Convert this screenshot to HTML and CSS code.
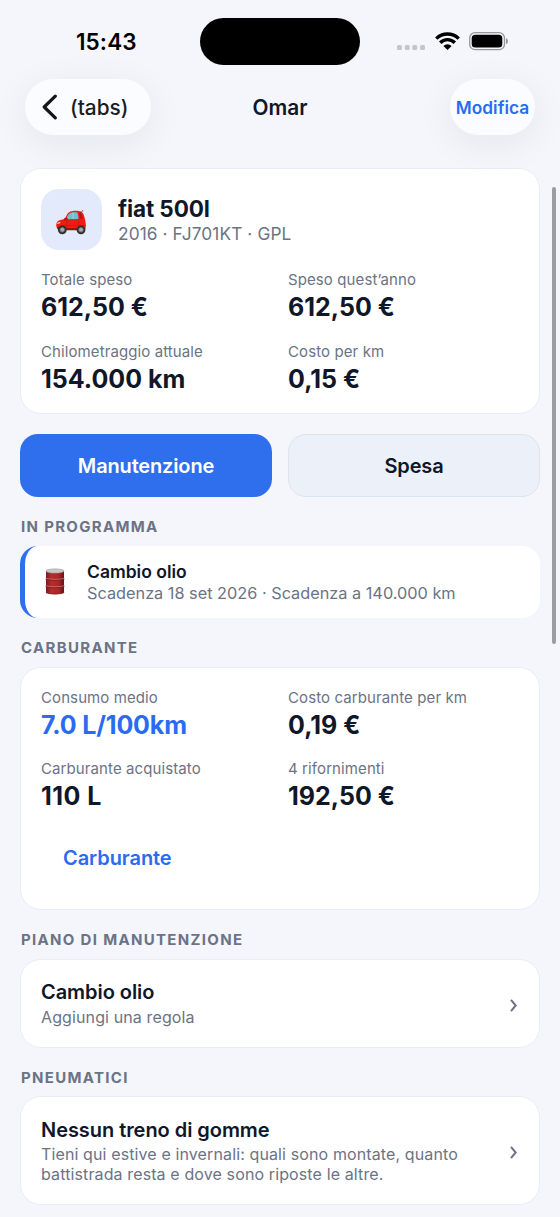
FILE: index.html
```html
<!DOCTYPE html>
<html lang="it">
<head>
<meta charset="utf-8">
<meta name="viewport" content="width=device-width, initial-scale=1">
<title>Omar</title>
<link rel="stylesheet" href="styles.css">
</head>
<body>
<div class="screen">
  <header class="top">
    <div class="status">
      <span class="time">15:43</span>
      <span class="island"></span>
      <span class="indicators">
        <svg class="dots" width="28" height="5" viewBox="0 0 28 5"><g fill="#c4c5ca"><rect width="5" height="5" rx="1.6"/><rect x="7.7" width="5" height="5" rx="1.6"/><rect x="15.3" width="5" height="5" rx="1.6"/><rect x="23" width="5" height="5" rx="1.6"/></g></svg>
        <svg class="wifi" width="25" height="18" viewBox="0 0 25 18"><g fill="none" stroke="#000" stroke-width="3.4"><path d="M1.3 6.6a16 16 0 0 1 22.4 0"/><path d="M5.2 10.7a10.3 10.3 0 0 1 14.6 0"/></g><path d="M8.4 14a5.8 5.8 0 0 1 8.2 0l-4.1 3.9z"/></svg>
        <svg class="battery" width="40" height="19" viewBox="0 0 40 19"><rect x=".7" y=".7" width="34.8" height="17" rx="5.4" fill="none" stroke="#96979b" stroke-width="1.3"/><rect x="2.7" y="2.8" width="30.6" height="12.8" rx="3.6"/><path d="M37 6.3c2.6.7 2.6 5.1 0 5.8z" fill="#96979b"/></svg>
      </span>
    </div>
    <nav class="nav">
      <button class="pill back"><svg width="16" height="26" viewBox="0 0 16 26"><path d="M13.3 2.2 2.2 13l11.1 10.8" fill="none" stroke="#151516" stroke-width="3.2" stroke-linecap="round" stroke-linejoin="round"/></svg><span>(tabs)</span></button>
      <h1 class="page-title">Omar</h1>
      <button class="pill edit"><span>Modifica</span></button>
    </nav>
  </header>

  <main class="content">
    <section class="card vehicle">
      <div class="vehicle-head">
        <div class="avatar">
          <svg width="33" height="26" viewBox="0 0 33 26">
            <path d="m26.2 4 1.8-3" stroke="#555" stroke-width=".8"/>
            <path d="M2.5 19.8C.6 17.6.8 13 3.8 11.5L10 9.8C11.5 5.8 13 3.2 15.3 2.4c3-1 8.4-1 11 .2 2.4 1.6 3.5 6 4.1 9.8.6 3.2.7 6.4-.5 8.4z" fill="#ee1c12"/>
            <path d="M11.2 10.2c1.2-3.8 2.6-5.8 4.6-6.4 2-.5 4.6-.6 6.5-.3.9 2.2 1.2 4.6 1 6.5z" fill="#70bfd0"/>
            <path d="M18 3.7v6.2" stroke="#a9dce5" stroke-width=".8"/>
            <path d="m24 3.5 1.8.2c1 2 1.5 4 1.7 6L25 9.8z" fill="#a91915"/>
            <path d="M5 16.5h26M12 11l-.5 8M24 10.5l-.5 7" stroke="#c8160f" stroke-width=".7" fill="none"/>
            <path d="M2 18h8l2 3H3zm9 1h12v2.3H11z" fill="#9c120d"/>
            <rect x="9.2" y="8.8" width="3.5" height="2.7" rx="1" fill="#bb1712"/>
            <path d="m2.3 14.5 3-1.2" stroke="#ffd4bd" stroke-width="1.3"/>
            <g fill="#302e31"><circle cx="7.3" cy="20.8" r="4.4"/><circle cx="26" cy="20.8" r="4.4"/></g>
            <g fill="#aaa9ab" stroke="#6c6b6e" stroke-width=".8"><circle cx="7.3" cy="20.8" r="2.3"/><circle cx="26" cy="20.8" r="2.3"/></g>
          </svg>
        </div>
        <div>
          <h2 class="vehicle-name">fiat 500l</h2>
          <p class="vehicle-meta">2016 · FJ701KT · GPL</p>
        </div>
      </div>
      <dl class="stats">
        <div class="stat"><dt>Totale speso</dt><dd>612,50 €</dd></div>
        <div class="stat"><dt>Speso quest’anno</dt><dd>612,50 €</dd></div>
        <div class="stat"><dt>Chilometraggio attuale</dt><dd>154.000 km</dd></div>
        <div class="stat"><dt>Costo per km</dt><dd>0,15 €</dd></div>
      </dl>
    </section>

    <div class="actions">
      <button class="btn primary">Manutenzione</button>
      <button class="btn secondary">Spesa</button>
    </div>

    <h3 class="section-title">IN PROGRAMMA</h3>
    <section class="reminder">
      <svg class="barrel" width="20" height="28" viewBox="0 0 20 28">
        <defs><linearGradient id="red"><stop stop-color="#741c20"/><stop offset=".3" stop-color="#b72c2d"/><stop offset=".7" stop-color="#a92629"/><stop offset="1" stop-color="#631519"/></linearGradient></defs>
        <path d="M1 3v21.5c2 2.3 16 2.3 18 0V3z" fill="url(#red)"/>
        <ellipse cx="10" cy="3" rx="9.1" ry="2.1" fill="#c9c7c7" stroke="#a58b8d" stroke-width=".6"/>
        <path d="M.6 10.2c3 1.5 15.8 1.5 18.8 0M.6 17.6c3 1.5 15.8 1.5 18.8 0" fill="none" stroke="#cb6e6b" stroke-width=".9"/>
        <path d="M.6 11.3c3 1.5 15.8 1.5 18.8 0M.6 18.7c3 1.5 15.8 1.5 18.8 0M.8 24.5c3 2 15.4 2 18.4 0" fill="none" stroke="#7d1c20" stroke-width=".7"/>
      </svg>
      <div>
        <h4 class="reminder-title">Cambio olio</h4>
        <p class="reminder-text">Scadenza 18 set 2026 · Scadenza a 140.000 km</p>
      </div>
    </section>

    <h3 class="section-title">CARBURANTE</h3>
    <section class="card fuel">
      <dl class="stats">
        <div class="stat"><dt>Consumo medio</dt><dd class="accent">7.0 L/100km</dd></div>
        <div class="stat"><dt>Costo carburante per km</dt><dd>0,19 €</dd></div>
        <div class="stat"><dt>Carburante acquistato</dt><dd class="liters">110 L</dd></div>
        <div class="stat"><dt>4 rifornimenti</dt><dd>192,50 €</dd></div>
      </dl>
      <button class="link">Carburante</button>
    </section>

    <h3 class="section-title">PIANO DI MANUTENZIONE</h3>
    <section class="card row plan">
      <div>
        <h4 class="row-title">Cambio olio</h4>
        <p class="row-text">Aggiungi una regola</p>
      </div>
      <svg class="chevron" width="8" height="13" viewBox="0 0 8 13"><path d="m1 .9 4.7 5.6L1 12.1" fill="none" stroke="#6b7385" stroke-width="2"/></svg>
    </section>

    <h3 class="section-title">PNEUMATICI</h3>
    <section class="card row tires">
      <div>
        <h4 class="row-title">Nessun treno di gomme</h4>
        <p class="row-text">Tieni qui estive e invernali: quali sono montate, quanto<br>battistrada resta e dove sono riposte le altre.</p>
      </div>
      <svg class="chevron" width="8" height="13" viewBox="0 0 8 13"><path d="m1 .9 4.7 5.6L1 12.1" fill="none" stroke="#6b7385" stroke-width="2"/></svg>
    </section>
  </main>
  <span class="scrollbar"></span>
</div>
</body>
</html>
```
FILE: styles.css
```css
* { box-sizing: border-box; margin: 0; padding: 0; }
body { background: #f4f6fb; color: #0f1728; font-family: Inter, "Noto Sans", sans-serif; }
button { border: 0; background: none; font: inherit; }
svg { display: block; flex: none; }

.screen { position: relative; width: 560px; height: 1217px; overflow: hidden; }

.top { height: 168px; }
.status { display: grid; grid-template-columns: 200px 160px 200px; height: 79px; padding-top: 18px; }
.time { padding: 9px 0 0 76px; font-size: 22.5px; line-height: 30px; font-weight: 600; letter-spacing: 0.1px; color: #000; }
.island { height: 47px; border-radius: 24px; background: #000; }
.indicators { display: flex; align-items: flex-start; padding-left: 37px; }
.dots { margin-top: 27px; }
.wifi { margin: 14px 0 0 10px; }
.battery { margin: 14px 0 0 9px; }

.nav { display: grid; grid-template-columns: 126px 1fr 126px; align-items: center; height: 56px; padding: 0 25px; }
.pill { display: flex; align-items: center; height: 56px; border-radius: 28px; background: #fbfcff; box-shadow: 0 8px 38px rgba(20, 22, 30, 0.07); white-space: nowrap; }
.back { width: 126px; padding-left: 16.5px; gap: 12.5px; font-size: 20.8px; font-weight: 500; color: #1c1c1e; }
.page-title { font-size: 20.8px; font-weight: 600; text-align: center; }
.edit { width: 85px; justify-self: end; justify-content: center; font-size: 17.3px; font-weight: 600; color: #2a6bf2; }

.content { padding: 0 20px; }
.card { border: 1px solid #e9eef5; border-radius: 21px; background: #fff; }

.vehicle { height: 246px; padding: 20px; }
.vehicle-head { display: flex; gap: 16px; height: 61px; }
.avatar { display: grid; place-items: center; width: 61px; height: 61px; border-radius: 18px; background: #e2eafc; padding-top: 4px; }
.vehicle-name { margin-top: 6px; font-size: 22.5px; line-height: 28px; font-weight: 700; letter-spacing: -0.1px; }
.vehicle-meta { font-size: 17.3px; line-height: 22px; letter-spacing: 0.1px; color: #6b7385; }

.stats { display: grid; grid-template-columns: 1fr 1fr; row-gap: 18.6px; column-gap: 16px; }
.vehicle .stats { margin-top: 20px; }
.stat dt { font-size: 15px; line-height: 20px; letter-spacing: 0.1px; color: #6b7385; }
.stat dd { margin-top: 1px; font-size: 25px; line-height: 32px; font-weight: 700; white-space: nowrap; }
.stat .accent { color: #2a6bf2; letter-spacing: -0.15px; }
.stat .liters { letter-spacing: 0.5px; }

.actions { display: grid; grid-template-columns: 1fr 1fr; gap: 16px; margin-top: 20px; height: 63px; }
.btn { border-radius: 18px; font-size: 20px; font-weight: 600; letter-spacing: -0.15px; }
.primary { background: #2f6fed; color: #fff; }
.secondary { border: 1px solid #dce4ef; background: #ecf0f8; color: #0f1728; }

.section-title { padding-left: 1px; font-size: 15px; line-height: 20px; font-weight: 700; letter-spacing: 1.32px; color: #6b7385; }
.actions + .section-title { margin-top: 20px; }

.reminder { display: flex; align-items: center; height: 72px; margin-top: 9px; padding-left: 20px; border-left: 5px solid #2f6fed; border-radius: 18px; background: #fff; }
.barrel { margin-right: 22px; }
.reminder-title { font-size: 17.5px; line-height: 22px; font-weight: 600; }
.reminder-text { font-size: 16.3px; line-height: 20px; color: #6b7385; white-space: nowrap; }
.reminder + .section-title { margin-top: 20px; }

.fuel { height: 243px; margin-top: 9px; padding: 20px; }
.fuel .stats { margin-top: -0.5px; }
.link { display: block; margin: 34px 0 0 22px; font-size: 20px; line-height: 24px; font-weight: 600; letter-spacing: -0.08px; color: #2a6bf2; }
.card + .section-title { margin-top: 20px; }

.row { display: flex; align-items: center; justify-content: space-between; margin-top: 9px; padding: 0 20px; }
.plan { height: 89px; }
.tires { height: 109px; margin-top: 8px; }
.tires .row-title { margin-top: 0; padding-bottom: 1px; }
.row-title { margin-top: -2px; padding-bottom: 2px; font-size: 20px; line-height: 26px; font-weight: 600; letter-spacing: -0.05px; }
.row-text { font-size: 16px; line-height: 20px; letter-spacing: 0.12px; color: #6b7385; white-space: nowrap; }
.chevron { margin: 3px 1px 0 0; }

.scrollbar { position: absolute; top: 187px; right: 4px; width: 4px; height: 457px; border-radius: 2px; background: #9b9d9f; }
```
